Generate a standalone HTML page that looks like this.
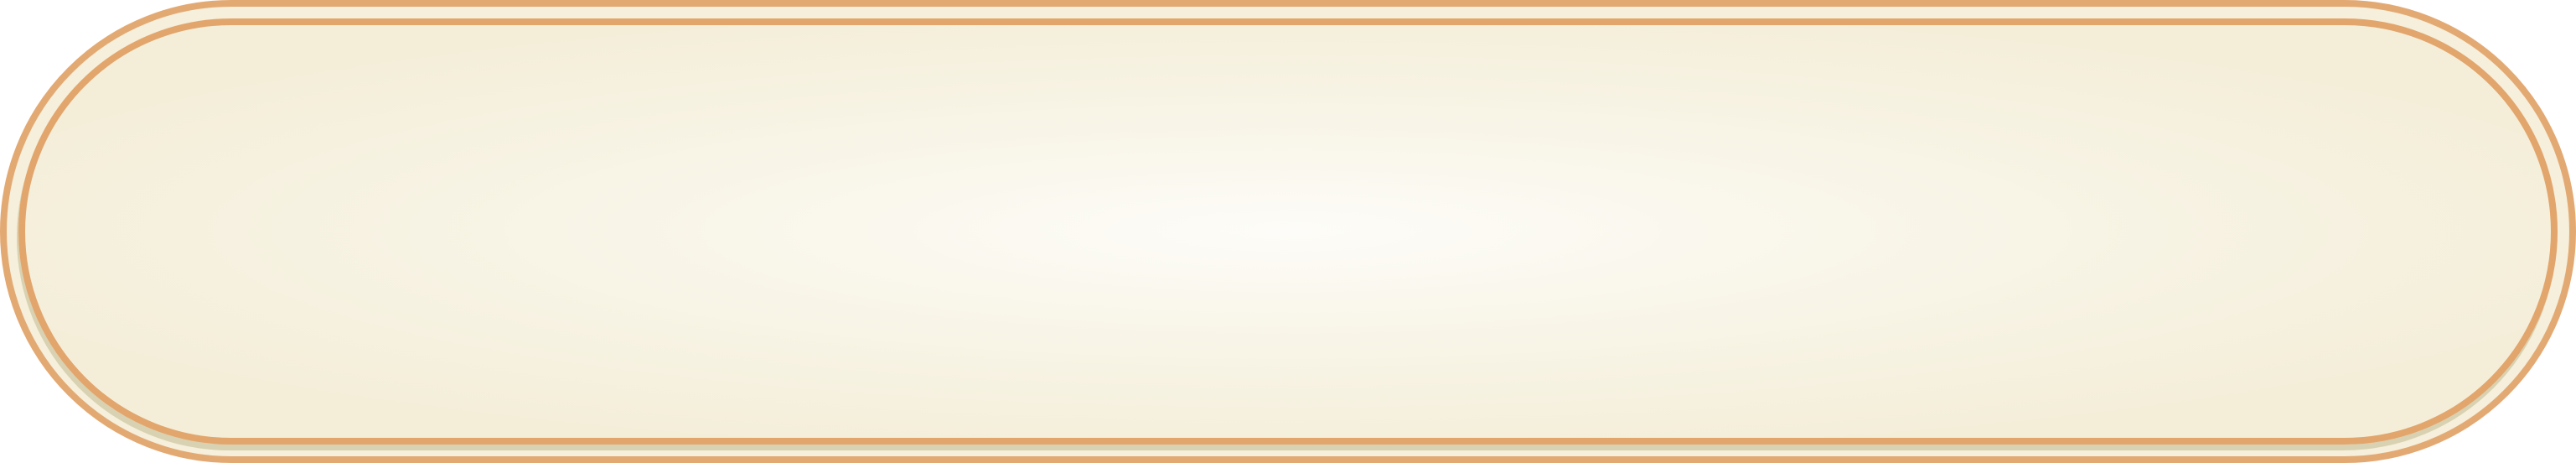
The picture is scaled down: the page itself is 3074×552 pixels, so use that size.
<!DOCTYPE html>
<html><head><style>
html,body{margin:0;padding:0;width:3074px;height:552px;overflow:hidden;background:#fff}
.outer{position:absolute;left:0;top:0;width:3074px;height:552px;box-sizing:border-box;border:8px solid #e3a973;border-radius:276px;background:#f5efdb}
.inner{position:absolute;left:22px;top:22px;width:3030px;height:508px;box-sizing:border-box;border:8px solid #e2a56c;border-radius:254px;
background:radial-gradient(ellipse 55% 55% at 50% 50%,#fdfcf8 0%,#f9f6ea 40%,#f4eed9 100%);
box-shadow:-2px 7px 0 #d8d2b2}
</style></head><body>
<div class="outer"></div>
<div class="inner"></div>
</body></html>
